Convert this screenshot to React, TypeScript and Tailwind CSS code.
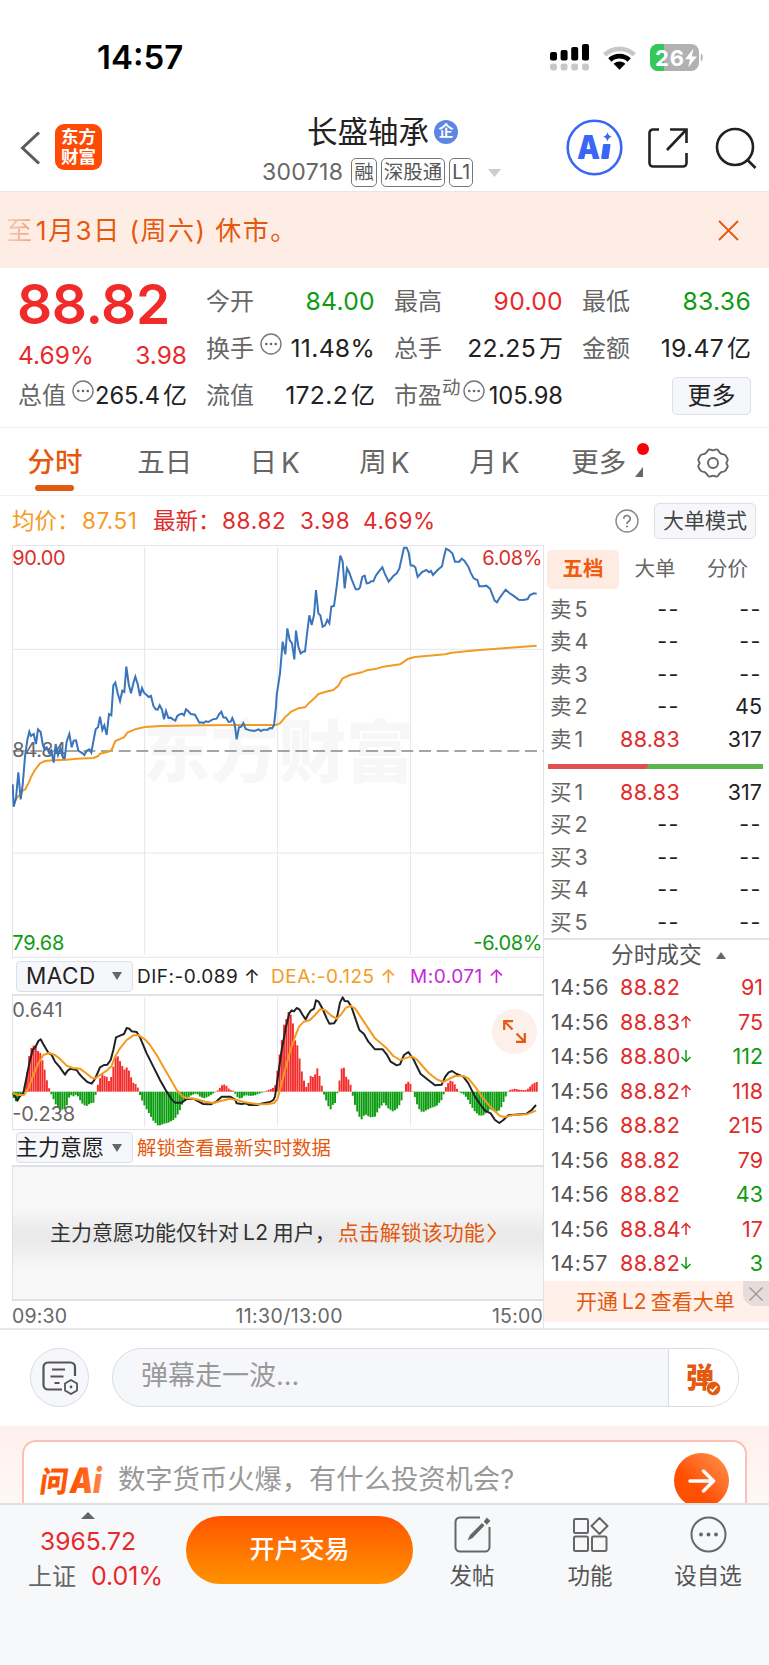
import React from 'react';

const priceLine =
  '38,733 41,800 48,775 55,697 62,778 68,735 75,650 82,600 88,575 93,588 101,582 108,612 114,568 122,576 128,612 133,628 140,622 148,640 154,632 161,668 167,612 174,645 181,625 190,655 194,655 200,605 208,582 215,622 221,602 228,601 235,632 243,637 248,640 253,645 260,632 268,628 274,638 280,605 287,568 294,562 300,530 307,570 313,556 320,585 327,522 334,526 340,436 346,428 353,460 360,483 367,452 373,456 379,380 386,432 393,460 400,430 406,410 413,432 420,468 426,444 432,458 440,465 446,471 453,468 460,497 467,508 473,509 479,496 486,509 492,538 498,513 505,534 512,533 519,538 526,542 532,528 539,523 546,521 552,526 558,508 565,514 572,522 585,524 592,537 598,548 604,547 611,549 617,544 625,546 638,538 650,536 657,523 664,515 670,532 678,533 686,546 692,545 697,534 704,552 710,598 717,562 724,560 730,549 737,567 750,571 763,573 776,568 783,573 790,569 803,569 810,564 816,565 822,556 828,500 830,465 840,400 848,305 856,343 862,265 869,300 876,310 883,358 888,272 895,320 902,340 909,335 915,334 921,282 928,226 935,255 942,225 948,150 955,220 961,226 968,260 975,256 982,240 988,250 994,200 1002,198 1010,140 1021,47 1028,65 1034,145 1041,85 1048,98 1055,118 1067,148 1075,148 1080,142 1087,110 1094,107 1100,130 1107,129 1113,124 1120,124 1127,108 1134,98 1147,82 1154,100 1166,125 1180,108 1190,100 1198,86 1205,55 1212,23 1220,23 1226,38 1232,76 1240,77 1246,82 1253,111 1266,96 1279,90 1287,97 1293,93 1299,105 1312,91 1326,79 1332,50 1338,26 1346,30 1357,40 1365,65 1378,65 1385,56 1393,62 1405,80 1412,98 1421,115 1432,120 1438,139 1450,139 1459,137 1470,146 1484,182 1491,187 1500,172 1517,149 1528,159 1540,167 1556,179 1570,180 1583,177 1590,165 1602,160 1610,161';

const avgLine =
  '45,782 55,768 62,765 68,752 76,748 85,730 95,707 105,690 120,670 135,663 160,661 200,659 230,656 280,654 295,648 300,641 325,635 335,630 346,603 372,592 382,578 405,568 435,561 480,558 620,556 750,555 828,555 840,550 855,532 875,514 895,505 915,502 928,488 943,475 955,462 975,456 1000,450 1015,437 1028,415 1050,405 1085,397 1100,391 1130,386 1150,380 1200,373 1225,356 1245,351 1335,343 1355,338 1430,331 1530,323 1610,317';

const difLine =
  '38,460 45,468 52,482 60,467 70,460 78,420 88,370 98,330 108,318 115,303 122,298 130,313 145,338 155,345 165,365 178,380 195,404 203,392 212,386 230,390 238,402 250,415 262,426 275,431 285,417 300,382 312,375 322,374 332,360 340,330 348,292 362,286 372,282 380,264 388,266 395,274 410,276 420,292 440,340 460,380 480,420 500,455 515,478 525,488 545,488 560,477 580,476 595,484 610,492 632,493 650,484 665,470 690,470 705,478 710,490 725,492 738,490 748,495 770,495 790,490 810,486 820,480 825,470 835,400 845,330 858,260 868,220 875,211 882,214 890,204 898,208 908,225 917,238 925,222 932,212 942,206 948,181 956,185 968,207 980,235 988,251 1002,250 1010,238 1020,188 1028,172 1034,183 1044,184 1055,202 1065,232 1078,270 1092,282 1105,305 1125,328 1148,328 1160,343 1172,365 1190,376 1200,373 1212,345 1225,336 1240,357 1250,378 1262,402 1278,415 1305,436 1325,434 1336,410 1346,397 1356,393 1370,402 1390,410 1405,430 1425,470 1440,492 1455,512 1472,520 1485,540 1498,549 1510,540 1525,526 1580,521 1595,510 1608,495';

const deaLine =
  '38,460 55,465 72,465 85,445 100,405 115,370 130,345 148,339 165,345 180,357 200,377 218,384 240,386 255,397 275,413 285,416 300,405 320,392 335,378 345,350 360,325 380,300 400,286 415,285 435,298 450,315 470,345 490,380 510,415 530,450 548,470 560,474 590,478 615,485 640,489 665,482 690,476 710,480 735,487 770,492 800,493 822,489 832,478 840,450 855,390 870,335 885,290 897,260 912,245 930,240 945,225 960,208 975,210 995,228 1010,236 1022,225 1038,203 1052,198 1065,205 1085,235 1105,265 1125,295 1145,312 1160,325 1180,348 1200,360 1215,355 1235,349 1250,358 1265,375 1285,398 1310,418 1330,426 1345,418 1365,408 1390,408 1405,415 1425,440 1450,475 1475,505 1500,528 1515,531 1540,525 1580,523 1608,512';

// outline of the MACD histogram, sampled into bars below
const histogram = [
  [38, 470], [50, 487], [58, 475], [70, 458], [74, 440], [82, 390], [90, 330], [98, 318], [106, 314], [113, 333], [119, 333],
  [126, 355], [133, 383], [139, 415], [145, 435], [150, 455], [158, 470], [165, 490], [180, 510], [190, 508], [198, 505],
  [208, 470], [215, 465], [222, 470], [230, 462], [240, 480], [250, 495], [262, 498], [270, 490], [282, 488], [288, 460],
  [292, 440], [298, 420], [306, 402], [312, 408], [320, 410], [328, 425], [334, 410], [342, 372], [348, 345], [355, 350],
  [362, 368], [368, 380], [376, 392], [382, 378], [388, 395], [396, 420], [402, 432], [408, 432], [416, 448], [420, 465],
  [430, 490], [440, 508], [450, 525], [460, 542], [475, 558], [490, 552], [505, 548], [520, 540], [530, 530], [540, 510],
  [548, 490], [560, 475], [575, 465], [590, 460], [600, 470], [612, 475], [625, 470], [640, 460], [648, 455], [655, 450],
  [662, 440], [670, 432], [680, 438], [688, 448], [695, 452], [702, 452], [710, 470], [722, 477], [735, 465], [750, 468],
  [765, 466], [780, 460], [795, 454], [805, 450], [815, 446], [825, 440], [832, 395], [838, 350], [845, 305], [852, 255],
  [858, 240], [866, 215], [873, 225], [880, 255], [885, 300], [892, 315], [898, 350], [904, 388], [911, 418], [918, 442],
  [925, 430], [932, 408], [942, 412], [952, 385], [958, 405], [964, 428], [968, 455], [975, 470], [982, 492], [991, 510],
  [998, 495], [1005, 490], [1011, 468], [1014, 440], [1018, 425], [1024, 388], [1030, 375], [1038, 410], [1045, 418],
  [1052, 435], [1056, 455], [1062, 485], [1070, 510], [1078, 530], [1085, 538], [1095, 522], [1110, 532], [1125, 530],
  [1138, 505], [1152, 488], [1165, 505], [1178, 514], [1190, 508], [1202, 490], [1210, 465], [1214, 438], [1222, 425],
  [1230, 426], [1236, 450], [1242, 462], [1250, 490], [1260, 512], [1268, 517], [1280, 510], [1295, 503], [1310, 498],
  [1325, 480], [1332, 460], [1336, 445], [1342, 432], [1353, 420], [1362, 428], [1370, 445], [1378, 456], [1390, 462],
  [1402, 475], [1415, 500], [1425, 515], [1440, 528], [1452, 525], [1470, 508], [1480, 512], [1495, 515], [1505, 500],
  [1515, 475], [1522, 458], [1530, 450], [1545, 446], [1560, 450], [1580, 450], [1590, 440], [1600, 430], [1616, 424],
];

const ZERO = 455;

const bars = Array.from({ length: 237 }, (_, i) => {
  const x = 38 + i * 6.65;
  const mid = x + 3;
  const n = Math.max(1, histogram.findIndex((p) => p[0] >= mid));
  const [x0, y0] = histogram[n - 1];
  const [x1, y1] = histogram[n];
  return { x, y: y0 + ((y1 - y0) * (mid - x0)) / (x1 - x0) };
});

const asks = [
  ['卖5', '--', '--'],
  ['卖4', '--', '--'],
  ['卖3', '--', '--'],
  ['卖2', '--', '45'],
  ['卖1', '88.83', '317'],
];
const bids = [
  ['买1', '88.83', '317'],
  ['买2', '--', '--'],
  ['买3', '--', '--'],
  ['买4', '--', '--'],
  ['买5', '--', '--'],
];
const trades = [
  { time: '14:56', price: '88.82', dir: '', vol: '91', up: true },
  { time: '14:56', price: '88.83', dir: 'up', vol: '75', up: true },
  { time: '14:56', price: '88.80', dir: 'down', vol: '112', up: false },
  { time: '14:56', price: '88.82', dir: 'up', vol: '118', up: true },
  { time: '14:56', price: '88.82', dir: '', vol: '215', up: true },
  { time: '14:56', price: '88.82', dir: '', vol: '79', up: true },
  { time: '14:56', price: '88.82', dir: '', vol: '43', up: false },
  { time: '14:56', price: '88.84', dir: 'up', vol: '17', up: true },
  { time: '14:57', price: '88.82', dir: 'down', vol: '3', up: false },
];

const Dots = () => (
  <svg width="22" height="22" viewBox="0 0 22 22" fill="none" className="shrink-0 -translate-y-[5px]">
    <circle cx="11" cy="11" r="10" stroke="#777" strokeWidth="1.4" />
    <circle cx="6.3" cy="11" r="1.3" fill="#666" />
    <circle cx="11" cy="11" r="1.3" fill="#666" />
    <circle cx="15.7" cy="11" r="1.3" fill="#666" />
  </svg>
);

const StatusBar = () => (
  <div className="flex h-[100px] items-center justify-between pt-[15px] pr-[65px] pl-[97px]">
    <span className="text-[33px] font-semibold text-black">14:57</span>
    <svg width="154" height="28" viewBox="551 44 154 28">
      <g fill="#000">
        <rect x="551" y="52" width="7" height="8.5" rx="2" />
        <rect x="561.6" y="50" width="7" height="10.5" rx="2" />
        <rect x="572.2" y="47" width="7" height="13.5" rx="2" />
        <rect x="583" y="44" width="7" height="16.5" rx="2" />
      </g>
      <g fill="#c8c8c8">
        <rect x="551" y="63.5" width="7" height="7" rx="2.4" />
        <rect x="561.6" y="63.5" width="7" height="7" rx="2.4" />
        <rect x="572.2" y="63.5" width="7" height="7" rx="2.4" />
        <rect x="583" y="63.5" width="7" height="7" rx="2.4" />
      </g>
      <path d="M604 53a24 24 0 0 1 33 0l-3.2 3.4a19.5 19.5 0 0 0-26.6 0z" fill="#c8c8c8" />
      <path d="M609.2 58.3a16.4 16.4 0 0 1 22.6 0l-3.3 3.4a11.7 11.7 0 0 0-16 0z" fill="#000" />
      <path d="M614.6 63.8a8.6 8.6 0 0 1 11.8 0L620.5 69.8z" fill="#000" />
      <rect x="651" y="44" width="49" height="27" rx="8" fill="#b1b1b3" />
      <path d="M665 44v27h-6a8 8 0 0 1-8-8V52a8 8 0 0 1 8-8z" fill="#35c759" />
      <path d="M701.8 53.5c2.6.6 2.6 7.4 0 8z" fill="#b1b1b3" />
      <text x="656" y="65.5" fill="#fff" fontSize="22" fontWeight="700" textLength="29">26</text>
      <path d="M694.5 48.5 686 59.2h5l-1.8 8 8.8-10.8h-5.2z" fill="#fff" />
    </svg>
  </div>
);

const Tag = ({ children }: { children: React.ReactNode }) => (
  <span className="flex h-[29px] items-center rounded-[5px] border border-[#777] px-[2px] text-[19.500px] text-[#555]">{children}</span>
);

const Header = () => (
  <header className="flex h-[92px] items-center border-b border-[#e6e7ea] pr-[12px] pl-[20px]">
    <svg width="21" height="34" viewBox="0 0 21 34" fill="none" stroke="#5a5a5a" strokeWidth="3" className="mt-[4px]">
      <path d="M19 1.5 2.5 17 19 32.5" />
    </svg>
    <div className="mt-[3px] ml-[14px] flex h-[46px] w-[47px] flex-col items-center justify-center rounded-[9px] bg-[#ff4a05] text-[17.500px] leading-[20px] font-bold text-white">
      <span>东方</span>
      <span>财富</span>
    </div>
    <div className="ml-[160px] flex w-[242px] flex-col items-start pt-[14px]">
      <div className="ml-[45px] flex h-[40px] -translate-y-px items-center">
        <span className="text-[30.500px] text-[#222]">长盛轴承</span>
        <span className="ml-[5px] flex size-[24px] items-center justify-center rounded-full bg-[#5b86e5] text-[15px] font-bold text-white">企</span>
      </div>
      <div className="flex h-[40px] items-center gap-[4px]">
        <span className="mr-[4px] text-[23px] tracking-[0.3px] text-[#666]">300718</span>
        <Tag>融</Tag>
        <Tag>深股通</Tag>
        <Tag>L1</Tag>
        <svg width="13" height="8" className="ml-[11px]">
          <path d="M0 0h13L6.5 8z" fill="#ccc" />
        </svg>
      </div>
    </div>
    <div className="mt-[4px] ml-auto flex items-center">
      <svg width="57" height="57" viewBox="0 0 57 57">
        <circle cx="28.5" cy="28.5" r="26.8" fill="#fff" stroke="#3a66f5" strokeWidth="2.6" />
        <text x="11" y="39.5" fill="#3a66f5" fontSize="33" fontWeight="900" textLength="23" lengthAdjust="spacingAndGlyphs">A</text>
        <path d="M38 26h5.500l-1.800 13h-5.500z" fill="#3a66f5" stroke="#3a66f5" strokeWidth="2" strokeLinejoin="round" />
        <path d="M41.500 13q.8 4.300 4.600 4.800-3.800.8-4.600 4.800-.8-4-4.600-4.800 3.800-.5 4.600-4.800z" fill="#3a66f5" />
      </svg>
      <svg width="40" height="40" viewBox="0 0 40 40" fill="none" stroke="#222" strokeWidth="2.600" className="ml-[25px]">
        <path d="M11 1.500H5A3.500 3.500 0 0 0 1.500 5v30A3.500 3.500 0 0 0 5 38.500h30a3.500 3.500 0 0 0 3.500-3.500V25M22 1.500h16.500V15M38 2 19 22" />
      </svg>
      <svg width="42" height="42" viewBox="0 0 42 42" fill="none" stroke="#222" strokeWidth="2.600" className="ml-[27px]">
        <circle cx="20" cy="20" r="18" />
        <path d="m32.500 33 8 8" />
      </svg>
    </div>
  </header>
);

const Banner = () => (
  <div className="flex h-[76px] items-center justify-between bg-[#feede5] pr-[30px] pl-[6px] text-[26px] text-[#e3590f]">
    <span className="whitespace-pre">
      <span className="bg-gradient-to-r from-[#f9cdb8] to-[#f0a078] bg-clip-text text-transparent">至</span>
      <span className="ml-[4px] tracking-[1.500px]">1月3日 (周六) 休市。</span>
    </span>
    <svg width="21" height="21" fill="none" stroke="#e3590f" strokeWidth="1.800">
      <path d="m1 1 19 19M20 1 1 20" />
    </svg>
  </div>
);

type CellProps = { label: string; value: string; unit?: string; color?: string; icon?: boolean; sup?: string };

const Cell = ({ label, value, unit, color, icon, sup }: CellProps) => (
  <div className="flex items-center whitespace-nowrap">
    <span className="text-[24px] text-[#666]">{label}</span>
    {sup && <span className="-translate-y-[8px] text-[18.500px] text-[#666]">{sup}</span>}
    {icon && <span className={sup ? 'ml-[2px]' : 'ml-[6px]'}><Dots /></span>}
    <span className={`ml-auto ${icon && (unit || sup) ? 'text-[23.700px]' : 'text-[24.700px] tracking-[0.300px]'} ${color || 'text-[#222]'}`}>{value}</span>
    {unit && <span className="ml-[3px] text-[24px] text-[#222]">{unit}</span>}
  </div>
);

const Quote = () => (
  <section className="grid h-[160px] grid-cols-4 grid-rows-[47px_47px_47px] gap-x-[19px] border-b border-[#eeeff2] px-[18px] pt-[10px]">
    <div className="row-span-2 flex flex-col">
      <span className="mt-[-1px] ml-[-1px] text-[55px] leading-[54px] font-semibold tracking-[-0.400px] text-[#f12a2a]">88.82</span>
      <div className="mt-[11px] flex justify-between text-[24.500px] leading-[26px] text-[#e8292c]">
        <span>4.69%</span>
        <span>3.98</span>
      </div>
    </div>
    <Cell label="今开" value="84.00" color="text-[#0f9a12]" />
    <Cell label="最高" value="90.00" color="text-[#e8292c]" />
    <Cell label="最低" value="83.36" color="text-[#0f9a12]" />
    <Cell label="换手" value="11.48%" icon />
    <Cell label="总手" value="22.25" unit="万" />
    <Cell label="金额" value="19.47" unit="亿" />
    <Cell label="总值" value="265.4" unit="亿" icon />
    <Cell label="流值" value="172.2" unit="亿" />
    <Cell label="市盈" sup="动" value="105.98" icon />
    <div className="flex items-center justify-end">
      <span className="flex h-[38px] w-[79px] items-center justify-center rounded-[5px] border border-[#dcdfe5] bg-[#f6f7fa] text-[24px] text-[#222]">更多</span>
    </div>
  </section>
);

const KTab = ({ label }: { label: string }) => (
  <span className="flex items-center justify-center gap-[4px]">
    <span>{label}</span>
    <span className="text-[28px]">K</span>
  </span>
);

const Tabs = () => (
  <nav className="grid h-[68px] grid-cols-7 items-center border-b border-[#f0f1f3] pt-[2px] text-[27.500px] text-[#666]">
    <span className="relative flex justify-center font-medium text-[#e3590f]">
      分时
      <span className="absolute top-[43px] h-[6px] w-[39px] rounded-full bg-[#e3590f]" />
    </span>
    <span className="text-center">五日</span>
    <KTab label="日" />
    <KTab label="周" />
    <KTab label="月" />
    <span className="relative pr-[11px] text-center">
      更多
      <span className="absolute top-px right-[10px] size-[12px] rounded-full bg-[#fb0007]" />
      <svg width="8" height="10" className="absolute right-[16px] bottom-[6px]">
        <path d="M8 0v10H0z" fill="#666" />
      </svg>
    </span>
    <span className="flex justify-center">
      <svg width="32" height="30" viewBox="0 0 32 30" fill="none" stroke="#666" strokeWidth="1.900" strokeLinejoin="round" className="-translate-x-px">
        <path d="M11 2.200q1-1.200 2.500-.6 2.500 1.400 5 0 1.500-.6 2.500.6l1.500 2.200q1.500 2 4 2 1.600.2 2.400 1.500l1.500 2.800q.6 1.400-.2 2.600-1.600 1.700 0 3.400.8 1.200.2 2.600l-1.500 2.800q-.8 1.300-2.400 1.500-2.500 0-4 2L21 27.800q-1 1.200-2.500.6-2.500-1.400-5 0-1.500.6-2.500-.6l-1.500-2.200q-1.500-2-4-2-1.600-.2-2.400-1.500l-1.500-2.800q-.6-1.400.2-2.600 1.600-1.700 0-3.400-.8-1.200-.2-2.600l1.500-2.800q.8-1.300 2.400-1.500 2.500 0 4-2z" />
        <circle cx="16" cy="15" r="5" />
      </svg>
    </span>
  </nav>
);

const InfoRow = () => (
  <div className="flex h-[49px] items-center pr-[13px] pl-[12px] text-[22.500px]">
    <span className="w-[70px] text-[#f59b23]">均价：</span>
    <span className="w-[71px] tracking-[0.500px] text-[#f59b23]">87.51</span>
    <span className="w-[69px] text-[#e02b2b]">最新：</span>
    <span className="w-[78px] tracking-[0.700px] text-[#e02b2b]">88.82</span>
    <span className="w-[63px] tracking-[0.700px] text-[#e02b2b]">3.98</span>
    <span className="tracking-[0.600px] text-[#e02b2b]">4.69%</span>
    <svg width="24" height="24" viewBox="0 0 24 24" fill="none" className="ml-auto">
      <circle cx="12" cy="12" r="11" stroke="#888" strokeWidth="1.400" />
      <path d="M8.800 9.800a3.200 3.200 0 1 1 4.800 2.700q-1.600.9-1.600 2.500" stroke="#777" strokeWidth="1.500" />
      <circle cx="12" cy="17.500" r="1" fill="#777" />
    </svg>
    <span className="ml-[15px] flex h-[36px] w-[102px] items-center justify-center rounded-[5px] border border-[#dcdfe5] bg-[#f6f7fa] text-[21px] text-[#444]">大单模式</span>
  </div>
);

const PriceChart = () => (
  <svg width="532" height="413" viewBox="36 15 1596 1239" fill="none" className="block">
    <g stroke="#e3e5ee" strokeWidth="3">
      <path d="M36 16.500H1632M36 328H1632M36 939H1632M36 1252H1632M37.500 15V1254" />
      <path d="M434 22V1244M833 22V1244M1231 22V1244" />
    </g>
    <text x="428" y="710" fill="#000" fillOpacity="0.03" fontSize="203" fontWeight="900" textLength="814">东方财富</text>
    <path d="M38 633H1630" stroke="#888" strokeWidth="5" strokeDasharray="36 17" />
    <g fontSize="60">
      <text x="37" y="74" fill="#d9302f" textLength="160">90.00</text>
      <text x="1447" y="74" fill="#d9302f" textLength="180">6.08%</text>
      <text x="37" y="652" fill="#666" textLength="162">84.84</text>
      <text x="37" y="1229" fill="#0f9a12" textLength="156">79.68</text>
      <text x="1420" y="1229" fill="#0f9a12" textLength="207">-6.08%</text>
    </g>
    <polyline points={avgLine} stroke="#f39a20" strokeWidth="6" strokeLinejoin="round" />
    <polyline points={priceLine} stroke="#3a74ba" strokeWidth="6" />
  </svg>
);

const MacdChart = () => (
  <div className="relative">
    <svg width="532" height="133" viewBox="36 168 1596 399" fill="none" className="block">
      <path d="M434 172V560M833 172V560M1231 172V560M37.500 165V567" stroke="#e3e5ee" strokeWidth="3" />
      {bars.map((b, i) => (
        <rect
          key={i}
          x={b.x}
          y={Math.min(b.y, ZERO)}
          width="5.800"
          height={Math.max(Math.abs(b.y - ZERO), 1.5)}
          fill={b.y < ZERO ? '#f42c2c' : '#0b9c10'}
        />
      ))}
      <g fontSize="60" fill="#666">
        <text x="37" y="231" textLength="151">0.641</text>
        <text x="37" y="543" textLength="188">-0.238</text>
      </g>
      <polyline points={difLine} stroke="#222" strokeWidth="6" strokeLinejoin="round" />
      <polyline points={deaLine} stroke="#f59a1c" strokeWidth="6" strokeLinejoin="round" />
    </svg>
    <span className="absolute top-[13px] right-[6px] flex size-[45px] items-center justify-center rounded-full bg-[#fdefe9]">
      <svg width="23" height="23" viewBox="0 0 23 23" fill="none" stroke="#e3590f" strokeWidth="2.200">
        <path d="M1.200 10V1.200H10M1.500 1.500l8 8M21.800 13v8.800H13M21.500 21.500l-8-8" />
      </svg>
    </span>
  </div>
);

const Select = ({ label, className }: { label: string; className: string }) => (
  <span className={`flex h-[31px] w-[117px] shrink-0 items-center justify-between rounded-[4px] border border-[#dcdfe5] bg-[#f6f7fa] pr-[10px] text-[#222] ${className}`}>
    {label}
    <svg width="10" height="8">
      <path d="M0 0h10L5 8z" fill="#666" />
    </svg>
  </span>
);

const Charts = () => (
  <div className="ml-[12px] w-[532px] border-r border-[#e0e2e8]">
    <PriceChart />
    <div className="flex h-[38px] items-center border-b-2 border-[#e0e2e6] pl-[4px] text-[19px] tracking-[0.500px] whitespace-nowrap">
      <Select label="MACD" className="pl-[9px] text-[22.500px]" />
      <span className="mt-[2px] ml-[4px] w-[134px] text-[#222]">DIF:-0.089 ↑</span>
      <span className="mt-[2px] w-[139px] text-[#f59b23]">DEA:-0.125 ↑</span>
      <span className="mt-[2px] text-[#c429d6]">M:0.071 ↑</span>
    </div>
    <MacdChart />
    <div className="flex h-[38px] items-center border-t border-b-2 border-[#dfe1e8] pl-[4px]">
      <Select label="主力意愿" className="text-[22px] indent-[-1px]" />
      <span className="mt-[2px] ml-[4px] text-[19.400px] text-[#e3590f]">解锁查看最新实时数据</span>
    </div>
    <div className="h-[134px] border-b-2 border-l border-[#dfdfe4]">
      <div className="flex h-full items-center bg-gradient-to-b from-[#f8f8f8] from-30% via-[#e9e9e9] via-52% to-[#f8f8f8] to-80% pl-[37px] text-[21px] whitespace-nowrap text-[#333]">
        <span>主力意愿功能仅针对</span>
        <span className="mx-[4px] tracking-[0.500px]">L2</span>
        <span>用户，</span>
        <span className="ml-[2px] flex items-center text-[#e3590f]">
          点击解锁该功能
          <svg width="9" height="20" fill="none" stroke="#e3590f" strokeWidth="1.800" className="ml-[2px]">
            <path d="m1 1 7 9-7 9" />
          </svg>
        </span>
      </div>
    </div>
    <div className="flex h-[28px] items-center justify-between pt-[4px] text-[19.500px] text-[#666]">
      <span className="tracking-[0.200px]">09:30</span>
      <span className="pl-[19px] tracking-[0.400px]">11:30/13:00</span>
      <span className="tracking-[0.200px]">15:00</span>
    </div>
  </div>
);

const LevelRow = ({ row }: { row: string[] }) => (
  <div className="flex h-[32.400px] items-center text-[21.500px] text-[#222]">
    <span className="w-[58px] text-[#666]">{row[0].charAt(0)}<span className="ml-[3px]">{row[0].charAt(1)}</span></span>
    <span className={`w-[72px] text-right ${row[1] === '--' ? 'tracking-[1.500px]' : 'tracking-[0.300px] text-[#e02b2b]'}`}>{row[1]}</span>
    <span className={`flex-1 text-right ${row[2] === '--' ? 'tracking-[1.500px]' : ''}`}>{row[2]}</span>
  </div>
);

const Tape = () => (
  <div className="flex w-[225px] flex-col">
    <div className="flex h-[48px] items-center pt-px pl-[3px] text-[20.500px] text-[#666]">
      <span className="flex h-[39px] w-[72px] items-center justify-center rounded-[5px] bg-[#feece3] font-bold text-[#f25a0c]">五档</span>
      <span className="w-[72px] text-center">大单</span>
      <span className="w-[73px] text-center">分价</span>
    </div>
    <div className="pr-[7px] pl-[6px]">
      {asks.map((row) => <LevelRow key={row[0]} row={row} />)}
    </div>
    <svg width="215" height="5" className="mt-[9px] mb-[7px] ml-[4px]">
      <rect width="215" height="5" fill="#5fb54c" />
      <path d="M0 0h101l-3 5H0z" fill="#e05050" />
    </svg>
    <div className="pr-[7px] pl-[6px]">
      {bids.map((row) => <LevelRow key={row[0]} row={row} />)}
    </div>
    <div className="flex h-[32px] items-center border-t-2 border-[#e0e2e8] pt-px pl-[67px] text-[22.700px] text-[#555]">
      分时成交
      <svg width="10" height="7" className="ml-[14px]">
        <path d="M0 7h10L5 0z" fill="#666" />
      </svg>
    </div>
    <div className="pr-[6px] pl-[7px] text-[21.500px]">
      {trades.map((t, i) => (
        <div key={i} className="flex h-[34.500px] items-center">
          <span className="w-[69px] tracking-[0.600px] text-[#555]">{t.time}</span>
          <span className="w-[60px] tracking-[0.400px] text-[#e02b2b]">{t.price}</span>
          {t.dir === 'up' && (
            <svg width="12" height="13" viewBox="0 0 12 13" fill="none" stroke="#e02b2b" strokeWidth="1.500"><path d="M6 13V1.500M1.500 6 6 1.500 10.500 6" /></svg>
          )}
          {t.dir === 'down' && (
            <svg width="12" height="13" viewBox="0 0 12 13" fill="none" stroke="#0f9a12" strokeWidth="1.500"><path d="M6 0v11.500M1.500 7 6 11.500 10.500 7" /></svg>
          )}
          <span className={`ml-auto ${t.up ? 'text-[#e02b2b]' : 'text-[#0f9a12]'}`}>{t.vol}</span>
        </div>
      ))}
    </div>
    <div className="relative mt-[1px] flex h-[41px] items-center bg-[#fff0ea] pb-px pl-[32px] text-[21px] text-[#e3590f]">
      开通<span className="mx-[4px]">L2</span>查看大单
      <span className="absolute top-0 right-0 flex h-[25px] w-[26px] items-center justify-center rounded-bl-[12px] bg-[#e6dcd9]">
        <svg width="14" height="14" stroke="#999" strokeWidth="1.400"><path d="m.5.5 13 13M13.500.5l-13 13" /></svg>
      </span>
    </div>
  </div>
);

const CommentBar = () => (
  <div className="flex h-[98px] items-center border-t-2 border-[#e6e7ea] pr-[30px] pb-px pl-[30px]">
    <span className="flex size-[59px] items-center justify-center rounded-full border border-[#dadce2] bg-[#f6f7fa]">
      <svg width="36" height="34" viewBox="0 0 36 34" fill="none" stroke="#555" strokeWidth="2.200">
        <path d="M33 15V6a4.500 4.500 0 0 0-4.500-4.500H6A4.500 4.500 0 0 0 1.500 6v18A4.500 4.500 0 0 0 6 28.500h14" />
        <path d="M10 8.500h13M8.500 15.500h13M12.500 22h5" />
        <path d="m29 19 6 3.400v7L29 33l-6-3.600v-7z" strokeWidth="1.800" />
        <circle cx="29" cy="26" r="1.400" fill="#555" stroke="none" />
      </svg>
    </span>
    <div className="ml-[23px] flex h-[59px] flex-1 overflow-hidden rounded-full border border-[#dadce2] bg-[#f6f7fa]">
      <span className="flex flex-1 items-center pb-[3px] pl-[28px] text-[27px] text-[#999]">弹幕走一波...</span>
      <span className="relative flex w-[70px] items-center border-l border-[#dadce2] bg-white pl-[17px] text-[28px] font-black text-[#e3590f]">
        弹
        <svg width="15" height="15" viewBox="0 0 15 15" className="absolute top-[32px] left-[37px]">
          <circle cx="7.500" cy="7.500" r="7.200" fill="#e3590f" stroke="#fff" strokeWidth=".8" />
          <path d="m4 7.800 2.600 2.500L11 5.300" fill="none" stroke="#fff" strokeWidth="1.700" />
        </svg>
      </span>
    </div>
  </div>
);

const AskAi = () => (
  <div className="h-[77px] overflow-hidden bg-gradient-to-b from-[#fff0ec] to-[#fff8f5] px-[22px] pt-[14px]">
    <div className="flex h-[90px] items-center rounded-t-[14px] border-2 border-b-0 border-[#fcc0b8] bg-white pr-[16px] pb-[11px] pl-[14px]">
      <svg width="66" height="40" viewBox="0 0 66 40" fill="url(#askGradient)" fontWeight="900" className="overflow-visible">
        <defs>
          <linearGradient id="askGradient" gradientUnits="userSpaceOnUse" x1="0" y1="0" x2="68" y2="0">
            <stop offset="0.6" stopColor="#ff5606" />
            <stop offset="1" stopColor="#ff8a4d" />
          </linearGradient>
        </defs>
        <g transform="skewX(-8)">
          <text x="5" y="31" fontSize="29" textLength="28" lengthAdjust="spacingAndGlyphs">问</text>
          <text x="35" y="32" fontSize="35" textLength="32" lengthAdjust="spacingAndGlyphs">Ai</text>
        </g>
      </svg>
      <span className="ml-[14px] text-[27.300px] text-[#999]">数字货币火爆，有什么投资机会?</span>
      <span className="ml-auto flex size-[55px] shrink-0 items-center justify-center rounded-full bg-gradient-to-bl from-[#ff9447] to-[#ff5000] to-60%">
        <svg width="28" height="24" viewBox="0 0 28 24" fill="none" stroke="#fff" strokeWidth="3.400" strokeLinecap="round" strokeLinejoin="round">
          <path d="M2 12h23M15.500 2 25.500 12l-10 10" />
        </svg>
      </span>
    </div>
  </div>
);

const NavItem = ({ label, children }: { label: string; children: React.ReactNode }) => (
  <div className="flex w-[118px] flex-col items-center pt-[11px]">
    <svg width="37" height="37" viewBox="0 0 37 37" fill="none" stroke="#666" strokeWidth="2">{children}</svg>
    <span className="mt-[7px] text-[22.500px] leading-[32px] text-[#555]">{label}</span>
  </div>
);

const BottomNav = () => (
  <footer className="flex h-[162px] border-t-2 border-[#e0e1e6] bg-[#f7f8fa]">
    <div className="flex w-[176px] flex-col items-center pt-[7px]">
      <svg width="14" height="7">
        <path d="M0 7h14L7 0z" fill="#666" />
      </svg>
      <span className="mt-[4px] text-[24.700px] leading-[36px] text-[#e8292c]">3965.72</span>
      <div className="mt-[-1px] ml-[15px] text-[25px] leading-[36px]">
        <span className="text-[24px] text-[#666]">上证</span>
        <span className="ml-[15px] text-[#e8292c]">0.01%</span>
      </div>
    </div>
    <button className="mt-[11px] ml-[10px] h-[68px] w-[227px] rounded-full bg-gradient-to-b from-[#ff5300] to-[#ff9100] text-[25px] font-medium text-white">开户交易</button>
    <div className="flex">
      <NavItem label="发帖">
        <path d="M26 1.500H6A4.500 4.500 0 0 0 1.500 6v25A4.500 4.500 0 0 0 6 35.500h25a4.500 4.500 0 0 0 4.500-4.500V11" />
        <path d="M13.500 24.500 16 19 28 7l2.500 2.500L18.500 22z" fill="#666" stroke="none" />
        <path d="m31 5.500 2-2.500 2 2-2.300 2.300z" fill="#666" />
      </NavItem>
      <NavItem label="功能">
        <rect x="2" y="3" width="14" height="14" rx="1.500" />
        <rect x="2" y="20.500" width="14" height="14.500" rx="1.500" />
        <rect x="20" y="20.500" width="14.500" height="14.500" rx="1.500" />
        <path d="m27.500 2 8 8-8 8-8-8z" strokeLinejoin="round" />
      </NavItem>
      <NavItem label="设自选">
        <circle cx="18.500" cy="18.500" r="17" />
        <g fill="#666" stroke="none">
          <circle cx="11" cy="18.500" r="1.900" />
          <circle cx="18.500" cy="18.500" r="1.900" />
          <circle cx="26" cy="18.500" r="1.900" />
        </g>
      </NavItem>
    </div>
  </footer>
);

const App = () => {
  return (
    <div className="h-[1665px] w-[769px] overflow-hidden bg-white font-[Inter,'Noto_Sans_CJK_SC',sans-serif]">
      <StatusBar />
      <Header />
      <Banner />
      <Quote />
      <Tabs />
      <InfoRow />
      <div className="flex h-[783px]">
        <Charts />
        <Tape />
      </div>
      <CommentBar />
      <AskAi />
      <BottomNav />
    </div>
  );
};

export default App;
